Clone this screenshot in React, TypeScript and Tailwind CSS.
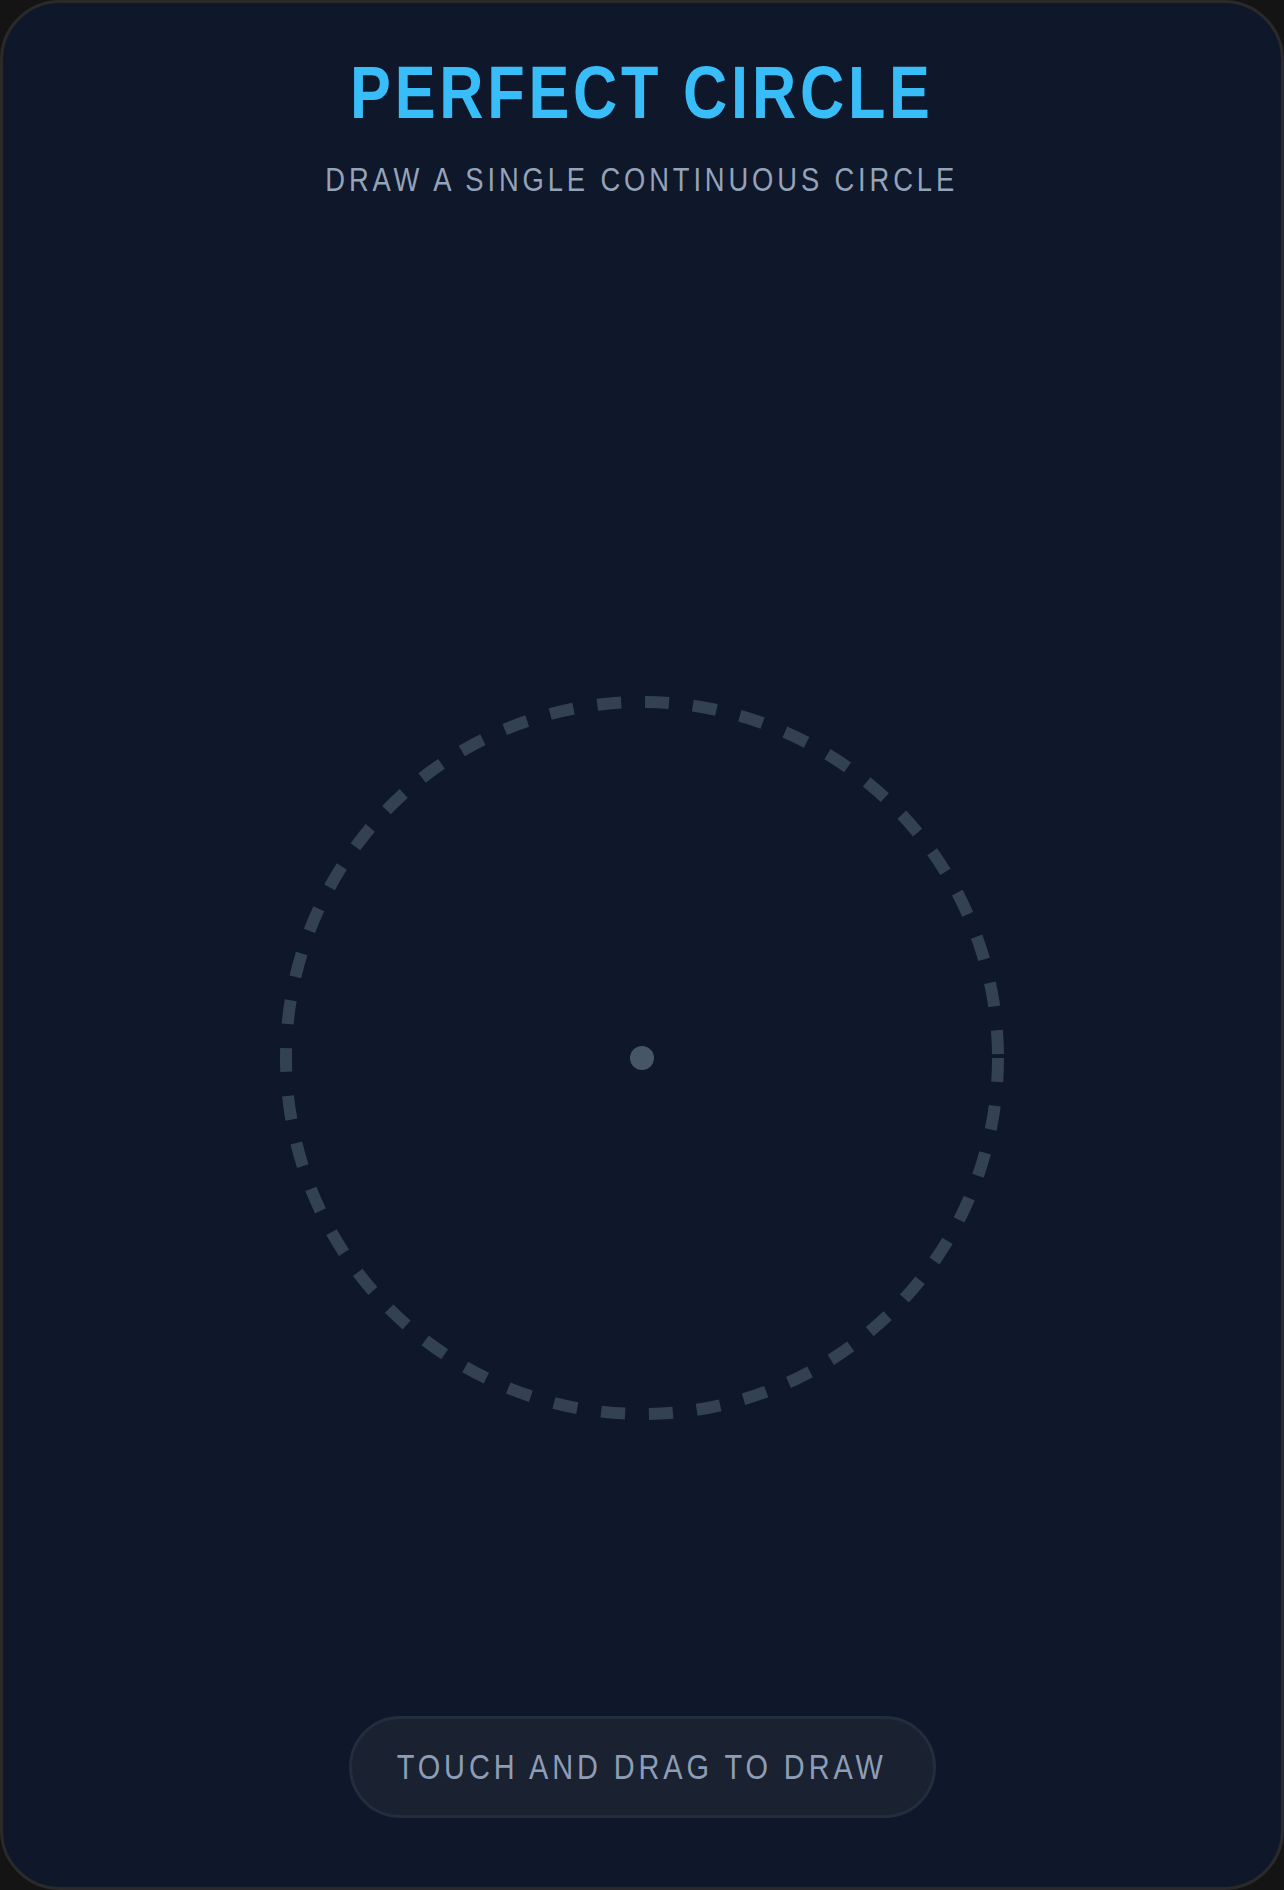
import React from "react";

export default function App() {
  const sans = { fontFamily: '"Liberation Sans", Arial, sans-serif' };
  return (
    <div className="w-[1284px] h-[1890px] bg-[#141414]">
      <div className="w-full h-full rounded-[60px] border-[3px] border-[#2a2a2a] bg-[#0f172a] flex flex-col items-center overflow-hidden">
        <h1
          className="mt-[53px] text-[74px] leading-[74px] font-bold tracking-[4.6px] text-[#38bdf8] whitespace-nowrap scale-x-[0.827] origin-center"
          style={sans}
        >
          PERFECT CIRCLE
        </h1>
        <p
          className="mt-[33px] text-[33px] leading-[33px] tracking-[4.67px] text-[#94a3b8] whitespace-nowrap scale-x-[0.829] origin-center"
          style={sans}
        >
          DRAW A SINGLE CONTINUOUS CIRCLE
        </p>
        <svg className="mt-[500px] shrink-0" width="724" height="724" viewBox="0 0 724 724">
          <circle cx="362" cy="362" r="356" fill="none" stroke="#334155" strokeWidth="12" strokeDasharray="24 24" />
          <circle cx="362" cy="362" r="12" fill="#475569" />
        </svg>
        <div className="mt-[295.5px] w-[587px] h-[102px] shrink-0 rounded-full border-[3px] border-[#222d3e] bg-[#1a2232] flex items-center justify-center">
          <span
            className="inline-block shrink-0 text-[35px] leading-[48px] tracking-[4.76px] text-[#8e9db5] whitespace-nowrap scale-x-[0.826] origin-center"
            style={sans}
          >
            TOUCH AND DRAG TO DRAW
          </span>
        </div>
      </div>
    </div>
  );
}
